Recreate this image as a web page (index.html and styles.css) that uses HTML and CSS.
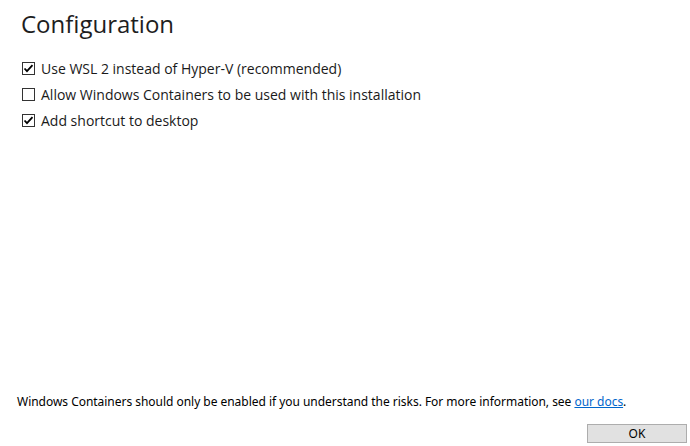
FILE: index.html
```html
<!DOCTYPE html>
<html>
<head>
<meta charset="utf-8">
<link rel="stylesheet" href="styles.css">
</head>
<body>
<div class="page">
  <h1 class="title">Configuration</h1>
  <div class="options">
    <label class="option"><span class="box checked"><svg viewBox="0 0 13 13" width="13" height="13"><path d="M2.5 6.5 L5 9.2 L10.5 3.2" fill="none" stroke="#000" stroke-width="1.8"/></svg></span><span class="text">Use WSL 2 instead of Hyper-V (recommended)</span></label>
    <label class="option"><span class="box"></span><span class="text">Allow Windows Containers to be used with this installation</span></label>
    <label class="option"><span class="box checked"><svg viewBox="0 0 13 13" width="13" height="13"><path d="M2.5 6.5 L5 9.2 L10.5 3.2" fill="none" stroke="#000" stroke-width="1.8"/></svg></span><span class="text">Add shortcut to desktop</span></label>
  </div>
  <div class="spacer"></div>
  <p class="note">Windows Containers should only be enabled if you understand the risks. For more information, see <a href="#" class="link">our docs</a>.</p>
  <div class="actions"><button class="ok">OK</button></div>
</div>
</body>
</html>
```
FILE: styles.css
```css
html, body {
  margin: 0;
  padding: 0;
  background: #fff;
}
.page {
  width: 690px;
  height: 446px;
  display: flex;
  flex-direction: column;
  box-sizing: border-box;
  padding: 0 3px 3px 17px;
}
.title {
  font-family: "Open Sans", sans-serif;
  font-weight: 400;
  font-size: 24px;
  line-height: 32px;
  color: #1e1e1e;
  margin: 8px 0 0 4px;
}
.options {
  display: flex;
  flex-direction: column;
  gap: 6px;
  margin: 18px 0 0 5px;
}
.option {
  display: flex;
  align-items: center;
  gap: 6px;
  height: 20px;
  font-family: "Open Sans", sans-serif;
  font-size: 14px;
  color: #1a1a1a;
}
.box {
  width: 13px;
  height: 13px;
  box-sizing: border-box;
  border: 1px solid #333;
  background: #fff;
  display: flex;
  position: relative;
}
.box svg {
  position: absolute;
  left: -1px;
  top: -1px;
}
.spacer {
  flex: 1;
}
.note {
  font-family: "Noto Sans", sans-serif;
  font-size: 12px;
  line-height: 16px;
  letter-spacing: -0.03px;
  color: #000;
  margin: 0 0 14px 0;
}
.link {
  color: #0066cc;
}
.actions {
  display: flex;
  justify-content: flex-end;
}
.ok {
  width: 100px;
  height: 19px;
  box-sizing: border-box;
  background: #e1e1e1;
  border: 1px solid #adadad;
  font-family: "Noto Sans", sans-serif;
  font-size: 12px;
  line-height: 16px;
  padding: 0;
  color: #000;
}
```
